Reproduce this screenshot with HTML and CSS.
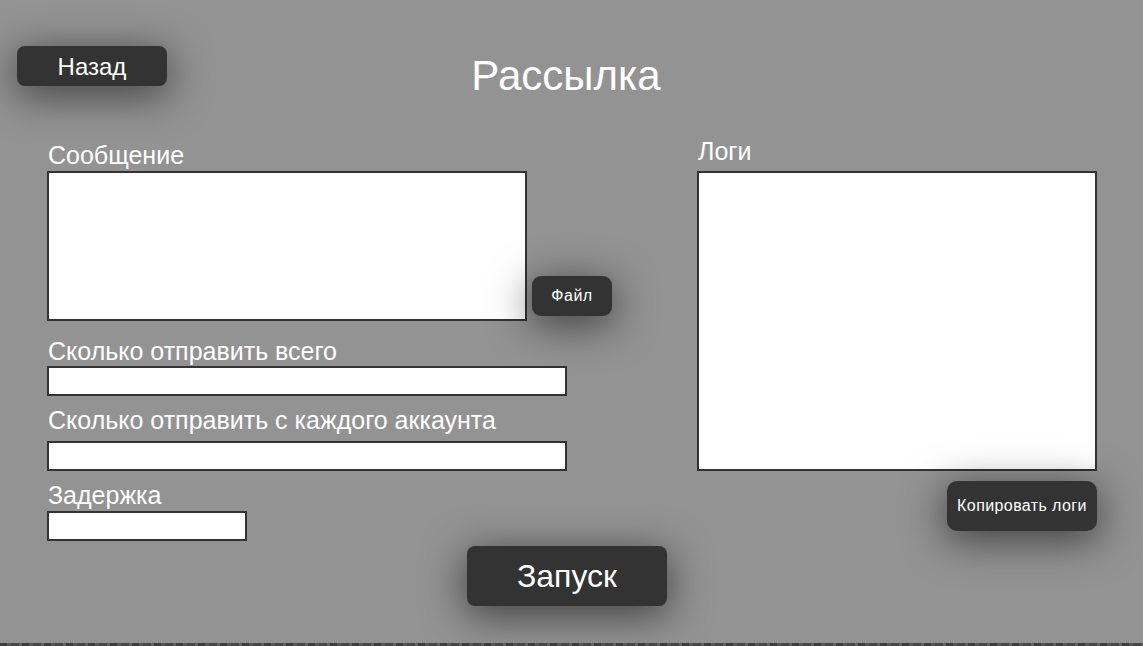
FILE: index.html
```html
<!DOCTYPE html>
<html lang="ru">
<head>
<meta charset="utf-8">
<title>Рассылка</title>
<link rel="stylesheet" href="styles.css">
</head>
<body>
<div class="page">
  <header class="header">
    <button class="btn btn-back">Назад</button>
    <h1 class="title">Рассылка</h1>
    <div></div>
  </header>
  <main class="main">
    <section class="col-left">
      <label class="label label-msg">Сообщение</label>
      <div class="msg-row">
        <textarea class="field msg-area"></textarea>
        <button class="btn btn-file">Файл</button>
      </div>
      <label class="label label-total">Сколько отправить всего</label>
      <input class="field input-wide" type="text">
      <label class="label label-each">Сколько отправить с каждого аккаунта</label>
      <input class="field input-wide" type="text">
      <label class="label label-delay">Задержка</label>
      <input class="field input-short" type="text">
    </section>
    <section class="col-right">
      <label class="label label-logs">Логи</label>
      <textarea class="field logs-area"></textarea>
      <button class="btn btn-copy">Копировать логи</button>
    </section>
  </main>
  <div class="launch-row">
    <button class="btn btn-launch">Запуск</button>
  </div>
  <div class="bottom-strip"></div>
</div>
</body>
</html>
```
FILE: styles.css
```css
* { box-sizing: border-box; }
html, body { margin: 0; padding: 0; }
body {
  background: #939393;
  font-family: "Liberation Sans", Arial, sans-serif;
  color: #fff;
}
.page {
  height: 646px;
  display: flex;
  flex-direction: column;
  overflow: hidden;
}
.header {
  display: grid;
  grid-template-columns: 150px 1fr 150px;
  align-items: start;
  padding: 46px 28px 0 17px;
}
.title {
  margin: 7px 0 0;
  font-weight: normal;
  font-size: 42px;
  line-height: 46px;
  text-align: center;
}
.btn {
  font-family: "Liberation Sans", Arial, sans-serif;
  background: #333;
  color: #fff;
  border: none;
  border-radius: 8px;
  box-shadow: 0 8px 40px 2px rgba(0, 0, 0, 0.55);
  padding: 0;
  cursor: pointer;
}
.btn-back { width: 150px; height: 40px; font-size: 24px; padding-top: 1px; }
.btn-file { width: 80px; height: 40px; font-size: 16px; letter-spacing: 0.5px; margin: 0 0 5px 5px; border-radius: 9px; }
.btn-copy { width: 150px; height: 50px; font-size: 16px; letter-spacing: 0.4px; margin-top: 10px; align-self: flex-end; border-radius: 10px; }
.btn-launch { width: 200px; height: 60px; font-size: 32px; }
.main {
  display: flex;
  align-items: flex-start;
  padding-left: 47px;
  gap: 85px;
}
.col-left {
  display: flex;
  flex-direction: column;
  width: 565px;
  padding-top: 42px;
}
.col-right {
  display: flex;
  flex-direction: column;
  width: 400px;
  padding-top: 38px;
}
.label {
  display: block;
  font-size: 25px;
  line-height: 28px;
  padding-left: 1px;
}
.label-msg { margin-bottom: 2px; }
.label-total { margin: 16px 0 1px; }
.label-each { margin: 10px 0 7px; }
.label-delay { margin: 10px 0 2px; }
.label-logs { margin-bottom: 6px; }
.field {
  display: block;
  background: #fff;
  border: 2px solid #333;
  border-radius: 0;
  margin: 0;
  padding: 2px 4px;
  resize: none;
  font-family: "Liberation Sans", Arial, sans-serif;
  outline: none;
}
.msg-row {
  display: flex;
  align-items: flex-end;
}
.msg-area { width: 480px; height: 150px; }
.input-wide { width: 520px; height: 30px; }
.input-short { width: 200px; height: 30px; }
.logs-area { width: 400px; height: 300px; }
.launch-row {
  display: flex;
  padding-left: 467px;
  margin-top: 5px;
}
.bottom-strip {
  margin-top: auto;
  height: 3px;
  background: repeating-linear-gradient(90deg, #3e3e3e 0 7px, #555 7px 11px, #474747 11px 19px, #5f5f5f 19px 22px);
}
```
